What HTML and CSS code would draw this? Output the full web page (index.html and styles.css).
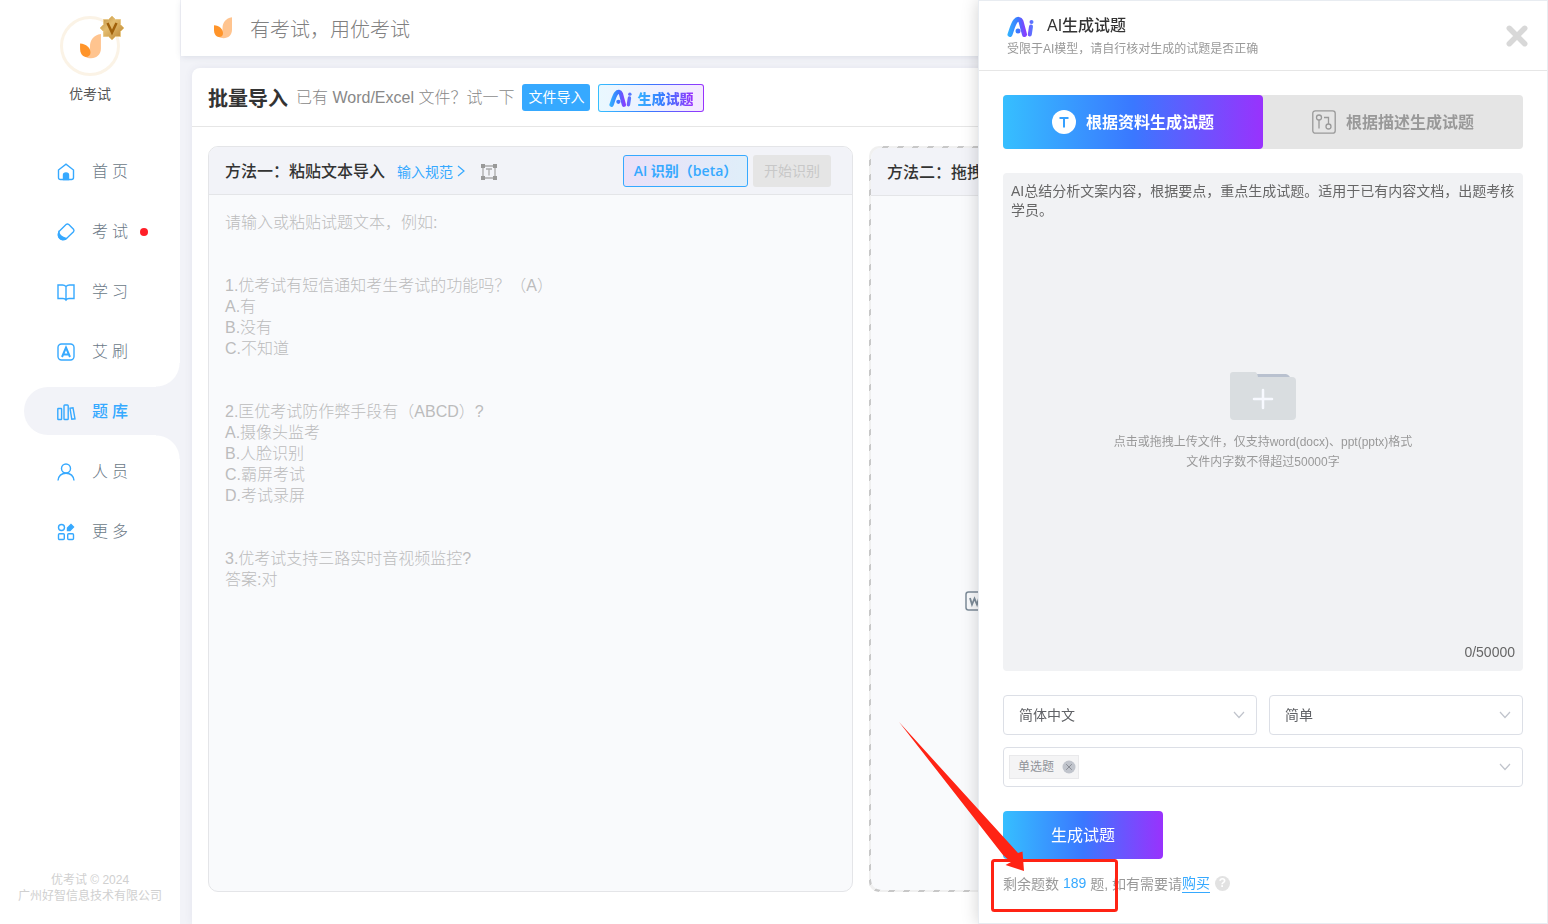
FILE: index.html
```html
<!DOCTYPE html>
<html lang="zh-CN">
<head>
<meta charset="utf-8">
<meta name="viewport" content="width=device-width, initial-scale=1">
<title>批量导入</title>
<link rel="stylesheet" href="styles.css">
</head>
<body>
<svg class="defs" width="0" height="0" aria-hidden="true">
  <defs>
    <linearGradient id="ai-grad" gradientUnits="userSpaceOnUse" x1="0" y1="0" x2="27" y2="0">
      <stop offset="0" stop-color="#30b8ff"/><stop offset=".4" stop-color="#3a78ff"/><stop offset=".68" stop-color="#8a3cff"/><stop offset="1" stop-color="#4a86ff"/>
    </linearGradient>
    <linearGradient id="gold" x1="0" y1="0" x2="1" y2="1">
      <stop offset="0" stop-color="#b98a3c"/><stop offset=".4" stop-color="#e4bd70"/><stop offset="1" stop-color="#b8812c"/>
    </linearGradient>
    <symbol id="ai" viewBox="0 0 27 21">
      <g fill="none" stroke="url(#ai-grad)" stroke-width="5" stroke-linejoin="round" stroke-linecap="round">
        <path d="M3 18.500C5 13 6 8 8.500 5C10.500 2.500 13 3 14 5.500L17.500 18.500"/>
        <path d="M24 10.500L22.800 18.500" stroke-width="4"/>
      </g>
      <circle cx="11" cy="15" r="2.500" fill="url(#ai-grad)"/>
      <circle cx="24.500" cy="6" r="2" fill="url(#ai-grad)"/>
    </symbol>
    <symbol id="leaf" viewBox="0 0 20 24">
      <path d="M20 0C13 1 9.500 6 9.500 12C9.500 17 8.500 20 4 21.500C12 26 20 22 20 14Z" fill="#ffc48f"/>
      <path d="M0 9C6 9.500 10 13 10 18C10 20.500 8 22 5.500 22C1.500 21.500 0 18 0 14Z" fill="#ff9429"/>
    </symbol>
    <symbol id="chevron" viewBox="0 0 12 8">
      <path d="M1 1L6 6.500L11 1" fill="none" stroke="#c0c4cc" stroke-width="1.200"/>
    </symbol>
  </defs>
</svg>

<div class="app">
  <aside class="sidebar">
    <div class="profile">
      <div class="avatar">
        <svg class="avatar-leaf"><use href="#leaf"/></svg>
        <svg class="vip" viewBox="0 0 24 24"><path d="M12 0L15.500 3.500L20.500 3.500L20.500 8.500L24 12L20.500 15.500L20.500 20.500L15.500 20.500L12 24L8.500 20.500L3.500 20.500L3.500 15.500L0 12L3.500 8.500L3.500 3.500L8.500 3.500Z" fill="url(#gold)" stroke="#e8c888"/><path d="M7.500 7L12 16.500L16.500 7" fill="none" stroke="#a0610b" stroke-width="2.500"/></svg>
      </div>
      <div class="profile-name">优考试</div>
    </div>
    <nav class="nav">
      <a class="nav-item" href="#"><svg class="nav-icon" viewBox="0 0 18 18"><path d="M1.500 7L9 1.200L16.500 7V14.500Q16.500 16.500 14.500 16.500H3.500Q1.500 16.500 1.500 14.500Z"/><path class="solid" d="M6.500 16.500V12Q6.500 10 9 10T11.500 12V16.500Z"/></svg><span>首页</span></a>
      <a class="nav-item" href="#"><svg class="nav-icon" viewBox="0 0 18 18"><path d="M2 8.500L9.300 1.300Q10.500 .5 11.800 1.500L16.500 6.200Q17.500 7.500 16.500 8.700L9 16Q5.500 17.500 3 15.500T2 8.500Z"/><path class="solid" d="M1.800 9.500C2.500 13 5.500 14.500 9 15.500Q5.500 18 3 15.500T1.800 9.500Z"/></svg><span>考试</span><i class="dot"></i></a>
      <a class="nav-item" href="#"><svg class="nav-icon" viewBox="0 0 18 18"><path d="M9 3.500Q7.500 2 5.500 2H1V15.500H6Q8 15.500 9 17Q10 15.500 12 15.500H17V2H12.500Q10.500 2 9 3.500ZM9 3.500V16"/></svg><span>学习</span></a>
      <a class="nav-item" href="#"><svg class="nav-icon" viewBox="0 0 18 18"><rect x="1" y="1" width="16" height="16" rx="3.500"/><path stroke-width="2" d="M5 14L9 4.500L13 14M6.500 11.500H11.500"/></svg><span>艾刷</span></a>
      <a class="nav-item active" href="#" aria-current="page"><svg class="nav-icon" viewBox="0 0 18 18"><rect x=".8" y="5.500" width="3.800" height="11" rx=".5"/><rect x="7" y="2" width="4.200" height="14.500" rx=".8"/><path d="M13 5.300L16 4.800L18 15.800L14.800 16.300Z"/></svg><span>题库</span></a>
      <a class="nav-item" href="#"><svg class="nav-icon" viewBox="0 0 18 18"><circle cx="9" cy="5.500" r="4.500"/><path d="M1 17.500C1.500 13 4.500 10.200 9 10.200S16.500 13 17 17.500"/></svg><span>人员</span></a>
      <a class="nav-item" href="#"><svg class="nav-icon" viewBox="0 0 18 18"><circle cx="4.500" cy="4.500" r="3"/><rect x="1.500" y="10.700" width="5.800" height="5.800" rx="1"/><rect x="10.700" y="10.700" width="5.800" height="5.800" rx="1"/><path class="solid" d="M10.500 5L14 1.500L16.500 4L13 7.500H10.500Z"/></svg><span>更多</span></a>
    </nav>
    <footer class="copyright">优考试 © 2024<br>广州好智信息技术有限公司</footer>
  </aside>

  <div class="main">
    <header class="topbar"><svg class="topbar-leaf"><use href="#leaf"/></svg><span>有考试，用优考试</span></header>
    <main class="card">
      <div class="card-head">
        <h1>批量导入</h1>
        <span class="hint">已有 Word/Excel 文件？试一下</span>
        <button class="btn-file" type="button">文件导入</button>
        <button class="btn-ai" type="button"><svg class="btn-ai-logo" role="img" aria-label="Ai"><use href="#ai"/></svg><span>生成试题</span></button>
      </div>
      <div class="panels">
        <section class="panel">
          <div class="panel-head">
            <h2><label for="paste">方法一：粘贴文本导入</label></h2>
            <a class="rules" href="#">输入规范<svg class="rules-arrow" viewBox="0 0 8 12"><path d="M1 1L7 6L1 11" fill="none" stroke="#36a9ff" stroke-width="1.200"/></svg></a>
            <svg class="frame-icon" viewBox="0 0 16 16"><path d="M2 2H14V14H2Z M5 5H11M8 5V11.500" fill="none" stroke="#aaa" stroke-width="1.300"/><path d="M0 0H4V4H0ZM12 0H16V4H12ZM0 12H4V16H0ZM12 12H16V16H12Z" fill="#999"/></svg>
            <button class="btn-detect" type="button">AI 识别（beta）</button>
            <button class="btn-start" type="button" disabled>开始识别</button>
          </div>
          <textarea id="paste" class="paste" placeholder="请输入或粘贴试题文本，例如:


1.优考试有短信通知考生考试的功能吗？（A）
A.有
B.没有
C.不知道


2.匡优考试防作弊手段有（ABCD）?
A.摄像头监考
B.人脸识别
C.霸屏考试
D.考试录屏


3.优考试支持三路实时音视频监控?
答案:对"></textarea>
        </section>
        <section class="drop-panel">
          <div class="drop-inner">
            <div class="panel-head"><h2>方法二：拖拽</h2></div>
            <div class="drop-body"><svg class="word-icon" viewBox="0 0 20 20"><rect x="1" y="1" width="18" height="18" rx="2.500" fill="none" stroke="#7d8c99" stroke-width="1.500"/><path d="M5 7L7 13.500L9.500 7.500L12 13.500L14 7" fill="none" stroke="#7d8c99" stroke-width="1.800"/></svg></div>
          </div>
        </section>
      </div>
    </main>
  </div>
</div>

<aside class="drawer">
  <header class="drawer-head">
    <div>
      <div class="drawer-title"><svg class="drawer-logo" role="img" aria-label="Ai"><use href="#ai"/></svg><h2>AI生成试题</h2></div>
      <p class="drawer-sub">受限于AI模型，请自行核对生成的试题是否正确</p>
    </div>
    <button class="close" type="button" aria-label="关闭"><svg viewBox="0 0 20 20"><path d="M3 3L17 17M17 3L3 17" stroke="#d8d8d8" stroke-width="5" stroke-linecap="round"/></svg></button>
  </header>
  <div class="drawer-body">
    <div class="tabs">
      <button class="tab tab-on" type="button"><svg class="tab-icon" viewBox="0 0 24 24"><circle cx="12" cy="12" r="12" fill="#fff"/><path d="M7.500 8H16.500M12 8V17.500" stroke="#36a0ff" stroke-width="2" fill="none"/></svg><span>根据资料生成试题</span></button>
      <button class="tab" type="button"><svg class="tab-icon" viewBox="0 0 24 24"><g fill="none" stroke="#999" stroke-width="1.300"><rect x=".8" y=".8" width="22.400" height="22.400" rx="2.500"/><circle cx="7" cy="7.500" r="2.500"/><path d="M7 10V18.500M12 7.500H16.500V14"/><circle cx="16.500" cy="16.500" r="2.500"/></g></svg><span>根据描述生成试题</span></button>
    </div>
    <div class="upload">
      <p class="upload-desc">AI总结分析文案内容，根据要点，重点生成试题。适用于已有内容文档，出题考核学员。</p>
      <button class="upload-drop" type="button">
        <svg class="folder" viewBox="0 0 66 48"><path d="M22 2H56Q60 3 61 8H22Z" fill="#b9c1cf"/><path d="M3 0H25Q27 0 28 5H62Q66 5 66 9V44Q66 48 62 48H4Q0 48 0 44V3Q0 0 3 0Z" fill="#d9dde0"/><path d="M33 18V36M24 27H42" stroke="#f7f9ff" stroke-width="2.500" stroke-linecap="round"/></svg>
        <span>点击或拖拽上传文件，仅支持word(docx)、ppt(pptx)格式<br>文件内字数不得超过50000字</span>
      </button>
      <div class="count">0/50000</div>
    </div>
    <div class="fields">
      <div class="field"><select aria-label="语言"><option>简体中文</option></select><svg class="chev"><use href="#chevron"/></svg></div>
      <div class="field"><select aria-label="难度"><option>简单</option></select><svg class="chev"><use href="#chevron"/></svg></div>
      <div class="field field-wide">
        <span class="tag">单选题<button class="tag-x" type="button" aria-label="移除"><svg viewBox="0 0 14 14"><circle cx="7" cy="7" r="6.500" fill="#c0c4cc"/><path d="M4.200 4.200L9.800 9.800M9.800 4.200L4.200 9.800" stroke="#8b8e96"/></svg></button></span>
        <svg class="chev"><use href="#chevron"/></svg>
      </div>
    </div>
    <button class="generate" type="button">生成试题</button>
    <p class="remain">剩余题数 <span class="num">189</span> 题, 如有需要请<a class="buy" href="#">购买</a><button class="help" type="button" aria-label="帮助">?</button></p>
  </div>
  <svg class="annotation" viewBox="0 0 220 194" aria-hidden="true">
    <rect x="93.500" y="141.500" width="124" height="50" rx="2" fill="none" stroke="#ff2314" stroke-width="3"/>
    <path d="M0 3L119 134L123.500 132.500L125 152L106.500 146L112 143L104 136Z" fill="#ff2314"/>
  </svg>
</aside>
</body>
</html>
```
FILE: styles.css
```css
* { box-sizing: border-box; }
body {
  margin: 0;
  font-family: "Liberation Sans", "Noto Sans CJK SC", sans-serif;
  font-size: 14px;
  color: #333;
  background: #f2f3f8;
  overflow: hidden;
}
h1, h2, p { margin: 0; }
a { text-decoration: none; }
button { font: inherit; border: 0; padding: 0; background: none; cursor: pointer; }
svg { display: block; flex: none; }
.defs { position: absolute; }

.app { display: flex; height: 100vh; }

/* Sidebar */
.sidebar {
  display: flex;
  flex-direction: column;
  flex: none;
  width: 180px;
  background: #fff;
  padding-bottom: 20px;
}
.profile {
  display: flex;
  flex-direction: column;
  align-items: center;
  height: 147px;
  padding-top: 16px;
}
.avatar {
  position: relative;
  display: flex;
  align-items: center;
  justify-content: center;
  width: 60px;
  height: 60px;
  border: 3px solid #fbf3e6;
  border-radius: 50%;
}
.avatar-leaf { width: 21px; height: 25px; }
.vip { position: absolute; top: -3px; right: -7px; width: 24px; height: 24px; }
.profile-name { margin-top: 8px; line-height: 20px; color: #555; }
.nav { display: flex; flex-direction: column; gap: 12px; padding-left: 24px; }
.nav-item {
  position: relative;
  display: flex;
  align-items: center;
  height: 48px;
  padding-left: 33px;
  gap: 17px;
  font-size: 16px;
  font-weight: 300;
  letter-spacing: 4px;
  color: #6b7987;
}
.nav-item span { padding-bottom: 2px; }
.nav-icon {
  width: 18px;
  height: 18px;
  margin-top: 1px;
  overflow: visible;
  fill: none;
  stroke: #36a9ff;
  stroke-width: 1.4;
}
.nav-icon .solid { fill: #36a9ff; }
.dot { width: 8px; height: 8px; margin: 2px 0 0 -9px; border-radius: 50%; background: #ff1f28; }
.active {
  background: #f2f3f8;
  border-radius: 24px 0 0 24px;
  color: #36a9ff;
  font-weight: 500;
}
.active::before, .active::after {
  content: "";
  position: absolute;
  right: 0;
  width: 24px;
  height: 24px;
}
.active::before { bottom: 100%; background: radial-gradient(circle at 0 0, transparent 23px, #f2f3f8 24px); }
.active::after { top: 100%; background: radial-gradient(circle at 0 100%, transparent 23px, #f2f3f8 24px); }
.copyright {
  margin-top: auto;
  text-align: center;
  font-size: 12px;
  line-height: 16px;
  color: #d0d0d0;
}

/* Main */
.main { display: flex; flex-direction: column; flex: 1; min-width: 0; }
.topbar {
  display: flex;
  align-items: center;
  flex: none;
  gap: 18px;
  height: 56px;
  margin-left: 1px;
  padding-left: 33px;
  font-size: 20px;
  font-weight: 300;
  color: #808080;
  background: #fff;
  box-shadow: 0 1px 6px rgba(60, 70, 110, .12);
}
.topbar-leaf { width: 18px; height: 22px; }
.card {
  display: flex;
  flex-direction: column;
  flex: 1;
  min-height: 0;
  margin: 12px 18px 0 12px;
  background: #fff;
  border-radius: 8px 8px 0 0;
  box-shadow: 0 0 8px rgba(60, 70, 110, .08);
}
.card-head {
  display: flex;
  align-items: center;
  flex: none;
  height: 59px;
  padding: 0 16px;
  gap: 8px;
  border-bottom: 1px solid #e6e6e6;
}
.card-head h1 { font-size: 20px; font-weight: 700; white-space: nowrap; }
.hint { padding-bottom: 2px; font-size: 16px; font-weight: 300; color: #888; white-space: nowrap; }
.btn-file {
  width: 68px;
  height: 27px;
  padding-bottom: 2px;
  border-radius: 3px;
  background: #36a9ff;
  color: #fff;
}
.btn-ai {
  display: flex;
  align-items: center;
  justify-content: center;
  gap: 5px;
  width: 106px;
  height: 28px;
  margin-top: 1px;
  border: 1px solid transparent;
  border-radius: 3px;
  background: linear-gradient(90deg, #e9f8ff, #f4e9ff) padding-box, linear-gradient(90deg, #36bfff, #3a78ff 50%, #9932fd) border-box;
}
.btn-ai-logo { width: 23px; height: 18px; }
.btn-ai span {
  margin-top: 2px;
  font-weight: 900;
  line-height: 20px;
  color: transparent;
  background: linear-gradient(90deg, #36b4ff, #3a78ff 50%, #9932fd);
  background-clip: text;
}
.panels {
  display: grid;
  grid-template-columns: 1fr 1fr;
  gap: 16px;
  flex: 1;
  min-height: 0;
  padding: 19px 16px 32px;
}
.panel, .drop-inner {
  display: flex;
  flex-direction: column;
  min-width: 0;
  background: #f9fafc;
  border-radius: 10px;
  overflow: hidden;
}
.panel { border: 1px solid #e4e5e8; }
.panel-head {
  display: flex;
  align-items: center;
  flex: none;
  height: 48px;
  padding: 0 21px 0 16px;
  background: #f2f3f8;
  border-bottom: 1px solid #e4e5e8;
}
.panel-head h2 { padding-bottom: 2px; font-size: 16px; font-weight: 500; white-space: nowrap; }
.rules { display: flex; align-items: center; gap: 4px; margin-left: 12px; color: #36a9ff; }
.rules-arrow { width: 8px; height: 12px; }
.frame-icon { width: 16px; height: 16px; margin: 2px 0 0 16px; }
.btn-detect {
  width: 125px;
  height: 32px;
  margin-left: auto;
  padding-bottom: 2px;
  border: 1px solid #36a9ff;
  border-radius: 3px;
  background: linear-gradient(90deg, #eae0f8, #dfeef9);
  color: #36a9ff;
  font-family: "Open Sans", "Noto Sans CJK SC", sans-serif;
  font-weight: 600;
}
.btn-start { width: 78px; height: 32px; margin-left: 5px; padding-bottom: 2px; border-radius: 3px; background: #e5e5e5; color: #c8c8c8; }
.paste {
  flex: 1;
  width: 100%;
  padding: 17px 16px;
  border: 0;
  resize: none;
  outline: 0;
  background: none;
  font-family: inherit;
  font-size: 16px;
  font-weight: 300;
  line-height: 21px;
}
.paste::placeholder { color: #bcbcbc; }
.drop-panel {
  display: flex;
  min-width: 0;
  padding: 2px;
  border-radius: 10px;
  background: linear-gradient(135deg, #c8c8c8 0 20%, #f0f0f0 20% 50%, #c8c8c8 50% 70%, #f0f0f0 70%) 0 0 / 15px 15px;
}
.drop-inner { flex: 1; }
.drop-body { display: flex; align-items: center; flex: 1; padding: 116px 0 0 94px; }
.word-icon { width: 20px; height: 20px; }

/* Drawer */
.drawer {
  position: fixed;
  top: 0;
  right: 0;
  display: flex;
  flex-direction: column;
  width: 570px;
  max-width: 100%;
  height: 100vh;
  border: 1px solid #e8ecf1;
  background: #fff;
  box-shadow: 0 0 16px rgba(0, 0, 0, .18);
}
.drawer-head {
  display: flex;
  align-items: center;
  justify-content: space-between;
  flex: none;
  height: 70px;
  padding: 0 19px 0 28px;
  border-bottom: 1px solid #e6e6e6;
}
.drawer-title { display: flex; align-items: center; gap: 13px; height: 24px; }
.drawer-title h2 { font-size: 16px; font-weight: 500; }
.drawer-logo { width: 27px; height: 21px; margin-top: 4px; }
.drawer-sub { font-size: 12px; line-height: 20px; margin-top: 3px; color: #999; }
.close svg { width: 22px; height: 22px; }
.drawer-body { display: flex; flex-direction: column; flex: 1; min-height: 0; padding: 24px 24px 30px; }
.tabs { display: flex; flex: none; border-radius: 4px; background: #e5e5e5; }
.tab {
  display: flex;
  align-items: center;
  justify-content: center;
  flex: 1;
  gap: 10px;
  height: 54px;
  border-radius: 4px;
  font-size: 16px;
  font-weight: 700;
  color: #999;
}
.tab span { padding-bottom: 2px; }
.tab-on, .generate { background: linear-gradient(90deg, #36bfff, #3a78ff 50%, #9932fd); color: #fff; }
.tab-icon { width: 24px; height: 24px; }
.upload {
  display: flex;
  flex-direction: column;
  flex: 1;
  min-height: 0;
  margin: 24px 0;
  padding: 9px 8px;
  border-radius: 4px;
  background: #f1f2f4;
  color: #666;
}
.upload-desc { line-height: 19px; }
.upload-drop {
  display: flex;
  flex-direction: column;
  align-items: center;
  justify-content: center;
  flex: 1;
  gap: 12px;
  padding-bottom: 18px;
  font-size: 12px;
  line-height: 20px;
  color: #999;
}
.folder { width: 66px; height: 48px; }
.count { text-align: right; line-height: 20px; }
.fields { display: grid; grid-template-columns: 1fr 1fr; gap: 12px; flex: none; }
.field {
  position: relative;
  display: flex;
  align-items: center;
  height: 40px;
  border: 1px solid #dcdfe6;
  border-radius: 4px;
}
.field-wide { grid-column: 1 / -1; padding-left: 5px; }
.field select {
  width: 100%;
  height: 100%;
  padding: 0 32px 0 15px;
  border: 0;
  outline: 0;
  appearance: none;
  background: none;
  font: inherit;
  color: #606266;
}
.chev { position: absolute; right: 11px; width: 12px; height: 8px; pointer-events: none; }
.tag {
  display: flex;
  align-items: center;
  gap: 8px;
  height: 24px;
  padding: 0 2px 0 8px;
  border: 1px solid #e9e9eb;
  background: #f4f4f5;
  font-size: 12px;
  line-height: 20px;
  color: #909399;
}
.tag-x svg { width: 14px; height: 14px; }
.generate { flex: none; width: 160px; height: 48px; margin-top: 24px; padding-bottom: 2px; border-radius: 4px; font-size: 16px; }
.remain { display: flex; align-items: center; flex: none; height: 20px; margin-top: 14px; color: #999; white-space: pre; }
.num, .buy { color: #36a9ff; }
.buy { line-height: 18px; border-bottom: 1px solid #36a9ff; }
.help {
  width: 15px;
  height: 15px;
  margin-left: 5px;
  border-radius: 50%;
  background: #e2e2e2;
  color: #fff;
  font-size: 12px;
  font-weight: 700;
  line-height: 15px;
}
.annotation { position: absolute; top: 718px; left: -80px; width: 220px; height: 194px; pointer-events: none; }
```
